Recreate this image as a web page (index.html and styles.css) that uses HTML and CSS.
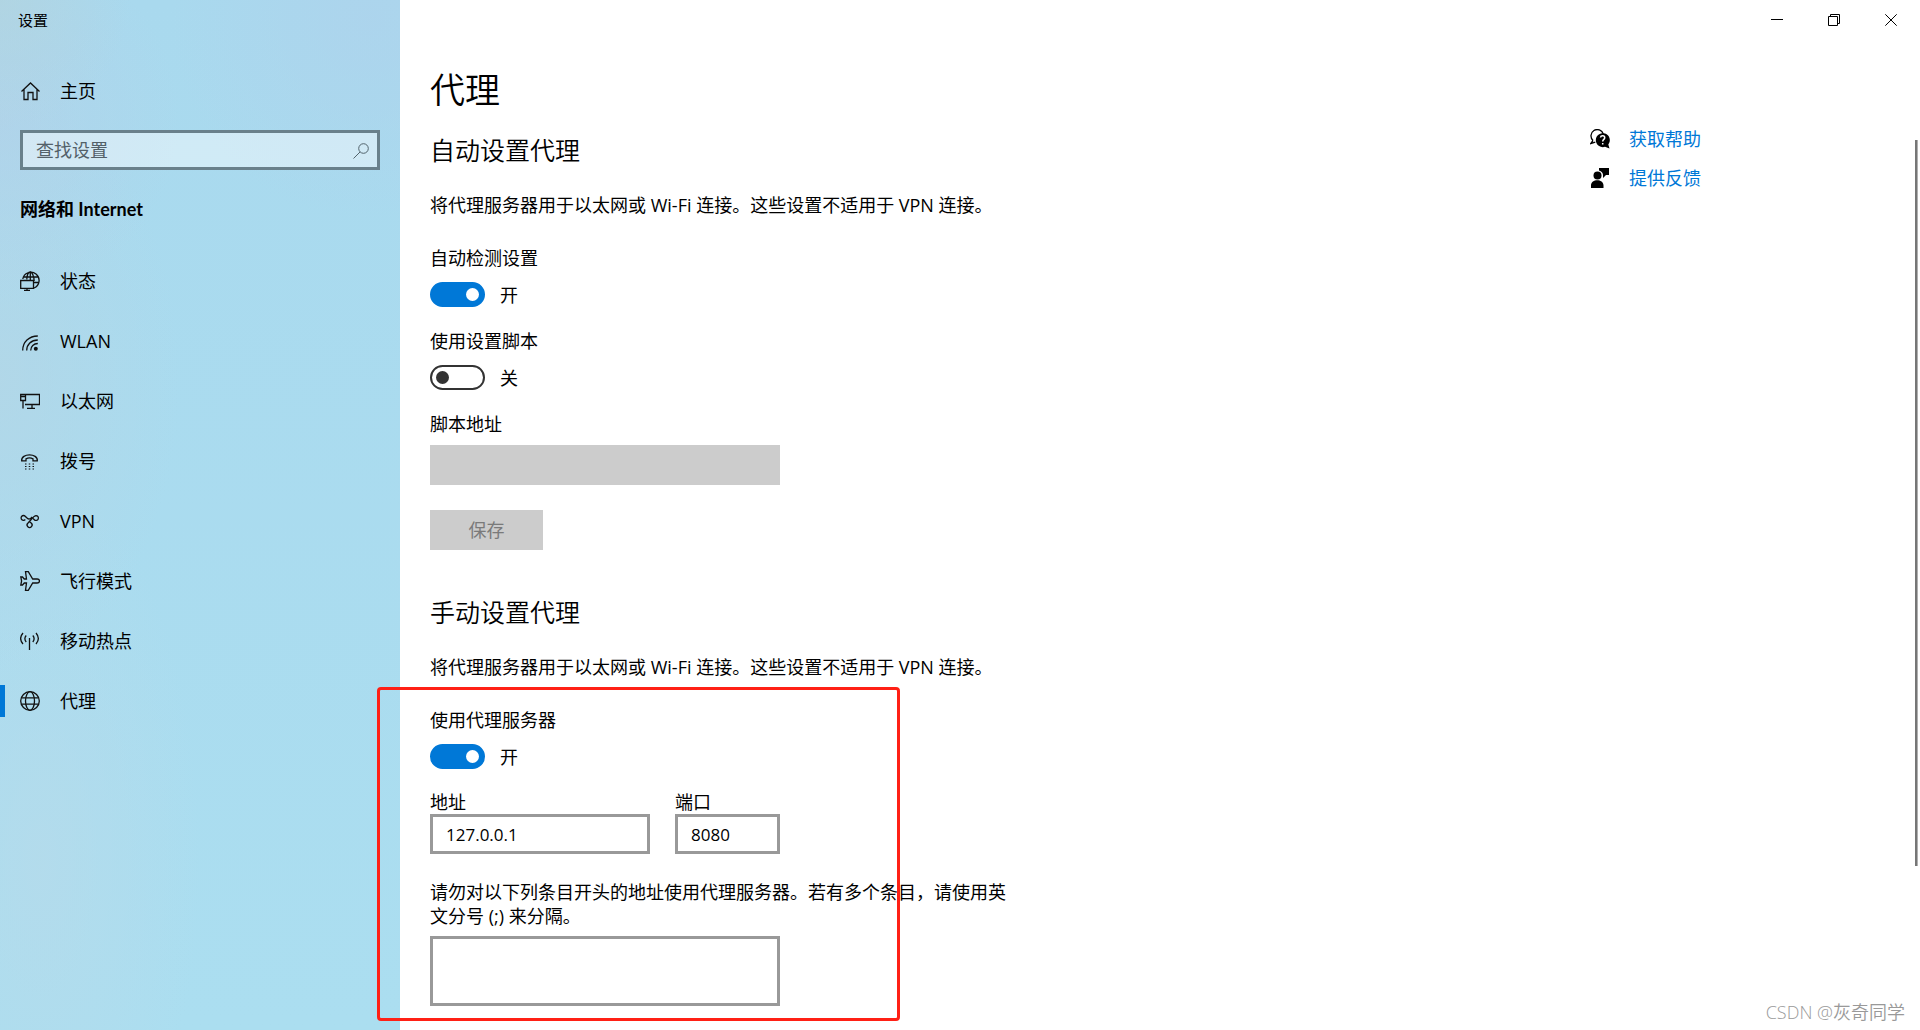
FILE: index.html
```html
<!DOCTYPE html>
<html lang="zh-CN">
<head>
<meta charset="utf-8">
<meta name="viewport" content="width=device-width, initial-scale=1">
<title>设置</title>
<link rel="stylesheet" href="styles.css">
</head>
<body>
<div class="app">
  <aside class="sidebar">
    <div class="window-title">设置</div>
    <a class="nav-link home" href="#home">
      <svg class="icon" viewBox="0 0 20 20"><path d="M1.500 10.500 10.500 2l9 8.500M4 8.500V18.500h4v-7h5v7h4V8.500"/></svg>
      主页
    </a>
    <form class="search">
      <input class="search-input" type="search" placeholder="查找设置" aria-label="查找设置">
      <svg class="search-icon" viewBox="0 0 16 16"><circle cx="10.500" cy="5.500" r="4.800"/><path d="M7 9 .5 15.500"/></svg>
    </form>
    <h2 class="nav-heading">网络和 Internet</h2>
    <nav class="nav">
      <a class="nav-link" href="#status">
        <svg class="icon" viewBox="0 0 20 20"><path d="M2.800 8A8.200 8.200 0 1 1 14 17M3.500 6h14.800M14 11.500h4.500M6.800 8.500C7 4 8.500 1 10.300 1s3.800 4.500 3.800 9M10.300 1v8"/><path d="M.7 9.500h12.800v7.800H.7zM7 17.300v2M4 19.400h6"/></svg>
        状态
      </a>
      <a class="nav-link" href="#wlan">
        <svg class="icon" viewBox="0 0 20 20"><path d="M2.700 19.500C2.700 11 9 5 17.800 5M6.700 19.500c0-6 4.500-10.500 11.100-10.500M10.700 19.500c0-4 3-7 7.100-7"/><circle class="solid" cx="15.800" cy="17.800" r="2"/></svg>
        WLAN
      </a>
      <a class="nav-link" href="#ethernet">
        <svg class="icon" viewBox="0 0 20 20"><path d="M6 3.500h13.500v10H5M.7 3.500H5.500v6H.7zM.7 5.500H5.500M3 9.500V17.500M12 13.500v3.500M7 17.400h8"/></svg>
        以太网
      </a>
      <a class="nav-link" href="#dialup">
        <svg class="icon" viewBox="0 0 20 20"><path d="M1.700 9.800C.8 2 18.200 2 17.300 9.800H13V7.800C11 6.800 8 6.800 6 7.800v2z"/><path class="dots" d="M5 13h9M5 15.500h9M5 18h9"/></svg>
        拨号
      </a>
      <a class="nav-link" href="#vpn">
        <svg class="icon" viewBox="0 0 20 20"><path d="M5.300 8.500A2.400 2.400 0 1 1 5.200 5.200C7 7 7.500 8 9 8s2-1 3-2M16 4.600a2.400 2.400 0 1 1-1.700 4.100l-1.200-1.200M16 4.600c-2 0-3.500 2.400-5 4.200l-3.200 3.500a2.500 2.500 0 1 0 3.600 0L9.900 11"/></svg>
        VPN
      </a>
      <a class="nav-link" href="#airplane">
        <svg class="icon" viewBox="0 0 20 20"><path d="M6.500 8 5.500.7h2.800L12.700 8h4.500c3 0 3 4 0 4h-4.500l-4.400 7.300H5.500L6.500 12H4.300L2.500 14H.8l.8-4L.8 6h1.700l1.800 2z"/></svg>
        飞行模式
      </a>
      <a class="nav-link" href="#hotspot">
        <svg class="icon" viewBox="0 0 20 20"><path d="M9.500 7v12M3 2C0 5.500 0 9.500 3 13M6.200 4.500C4.500 6.500 4.500 8.800 6.200 11M16 2c3 3.500 3 7.500 0 11M12.800 4.500c1.700 2 1.700 4.300 0 6.500"/></svg>
        移动热点
      </a>
      <a class="nav-link selected" href="#proxy" aria-current="page">
        <svg class="icon" viewBox="0 0 20 20"><circle cx="10" cy="10" r="9.300"/><ellipse cx="10" cy="10" rx="4.500" ry="9.300"/><path d="M1.500 6.800h17M1.500 13.200h17"/></svg>
        代理
      </a>
    </nav>
  </aside>

  <div class="window">
    <header class="titlebar">
      <button class="caption" type="button" aria-label="最小化"><svg viewBox="0 0 12 12"><path d="M0 5.500h12"/></svg></button>
      <button class="caption" type="button" aria-label="还原"><svg viewBox="0 0 12 12"><path d="M.5 2.500h9v9h-9zM2.500 2.500v-2h9v9h-2"/></svg></button>
      <button class="caption" type="button" aria-label="关闭"><svg viewBox="0 0 12 12"><path d="M.3.3l11.400 11.400M11.700.3.3 11.700"/></svg></button>
    </header>

    <div class="page">
      <main class="content">
        <h1 class="page-title">代理</h1>

        <section>
          <h2 class="section-title">自动设置代理</h2>
          <p class="intro">将代理服务器用于以太网或 Wi-Fi 连接。这些设置不适用于 VPN 连接。</p>
          <label class="label first" for="detect">自动检测设置</label>
          <div class="switch-row"><input class="switch" id="detect" type="checkbox" role="switch" checked><span>开</span></div>
          <label class="label" for="script">使用设置脚本</label>
          <div class="switch-row"><input class="switch" id="script" type="checkbox" role="switch"><span>关</span></div>
          <label class="label" for="script-url">脚本地址</label>
          <input class="field disabled" id="script-url" type="text" disabled>
          <button class="save" type="button" disabled>保存</button>
        </section>

        <section class="manual">
          <h2 class="section-title">手动设置代理</h2>
          <p class="intro">将代理服务器用于以太网或 Wi-Fi 连接。这些设置不适用于 VPN 连接。</p>
          <label class="label first" for="use-proxy">使用代理服务器</label>
          <div class="switch-row"><input class="switch" id="use-proxy" type="checkbox" role="switch" checked><span>开</span></div>
          <div class="endpoint">
            <div class="address"><label for="address">地址</label><input class="field" id="address" type="text" value="127.0.0.1"></div>
            <div class="port"><label for="port">端口</label><input class="field" id="port" type="text" value="8080"></div>
          </div>
          <label class="label exceptions-label" for="exceptions">请勿对以下列条目开头的地址使用代理服务器。若有多个条目，请使用英文分号 (;) 来分隔。</label>
          <textarea class="field exceptions" id="exceptions"></textarea>
        </section>
      </main>

      <aside class="related">
        <a class="related-link" href="#help">
          <svg class="related-icon" viewBox="0 0 20 20"><path class="line" d="M3 11.500A6.300 6.300 0 1 1 13.300 5M3 11.500.8 14.500l4.500-1.300"/><path d="M19.500 19.500 15 17.800A7 7 0 1 1 18.300 15.500z"/><path class="mark" d="M10.500 8.500c.3-2.500 4.300-2.200 4.200.2 0 1.800-2 1.600-2 3.800M12.700 14v1.500"/></svg>
          获取帮助
        </a>
        <a class="related-link" href="#feedback">
          <svg class="related-icon" viewBox="0 0 20 20"><circle cx="7.500" cy="7.500" r="4"/><path d="M1 20v-2.500C1 10.500 13.500 10.500 13.500 17.500V20zM9 0h10v7h-3l-3 3V7c0-2-1.500-4-4-4.500z"/></svg>
          提供反馈
        </a>
      </aside>
    </div>
    <div class="scroll-thumb"></div>
  </div>
  <div class="highlight"></div>
  <div class="watermark">CSDN @灰奇同学</div>
</div>
</body>
</html>
```
FILE: styles.css
```css
* { box-sizing: border-box; }

body {
  margin: 0;
  background: #fff;
  color: #000;
  font: 400 18px/24px "Open Sans", "Noto Sans CJK SC", sans-serif;
}

h1, h2, p { margin: 0; font-weight: inherit; }
a { color: inherit; text-decoration: none; }
input, button, textarea { font: inherit; color: inherit; }

.app {
  position: relative;
  display: grid;
  grid-template-columns: 400px 1fr;
  min-height: 100vh;
}

/* Sidebar */
.sidebar {
  background:
    radial-gradient(circle at 0 0, #b4d3dc99, transparent 130px),
    radial-gradient(circle at 0 120px, #b3d1e8aa, transparent 180px),
    radial-gradient(circle at 370px 20px, #aed2ecaa, transparent 200px),
    radial-gradient(ellipse at 0 380px, #b4d6e6bb, transparent 180px),
    radial-gradient(ellipse at 40px 860px, #b5dbebcc, transparent 160px),
    linear-gradient(#a9d9ee, #abdef0);
}

.window-title {
  padding: 8px 18px;
  font-size: 15px;
}

.nav-link {
  display: flex;
  align-items: center;
  gap: 20px;
  height: 60px;
  padding-left: 20px;
}

.home { margin: 21px 0 9px; }

.icon {
  width: 20px;
  height: 20px;
  fill: none;
  stroke: #111;
  stroke-width: 1.3;
}
.icon .solid { fill: #111; stroke: none; }
.icon .dots { stroke-dasharray: 1.500 2.250; stroke-width: 1; }

.search {
  position: relative;
  margin: 0 20px;
}
.search-input {
  display: block;
  width: 100%;
  height: 40px;
  padding: 0 40px 0 13px;
  border: 3px solid #69808b;
  border-radius: 0;
  outline: 0;
  background: #ffffff73;
  appearance: none;
}
.search-input::placeholder { color: #536068; opacity: 1; }
.search-icon {
  position: absolute;
  top: 13px;
  right: 11px;
  width: 16px;
  height: 16px;
  fill: none;
  stroke: #52636c;
}

.nav-heading {
  padding: 27px 20px 30px;
  font-family: Lato, "Noto Sans CJK SC", sans-serif;
  font-size: 18px;
  font-weight: 700;
}

.selected {
  padding-left: 15px;
  border-left: 5px solid #0078d7;
  border-image: linear-gradient(transparent 25%, #0078d7 25% 75%, transparent 75%) 1;
  border-width: 0 0 0 5px;
}

/* Window chrome */
.window {
  position: relative;
  min-width: 0;
}
.titlebar {
  display: flex;
  justify-content: flex-end;
  padding-right: 1px;
}
.caption {
  display: grid;
  place-items: center;
  width: 57px;
  height: 40px;
  padding: 0;
  border: 0;
  background: none;
}
.caption svg {
  width: 12px;
  height: 12px;
  fill: none;
  stroke: #000;
}

.page {
  display: grid;
  grid-template-columns: 1fr 330px;
  padding: 26px 0 24px 30px;
}
.page-title {
  margin-bottom: 20px;
  font-size: 35px;
  font-weight: 350;
  line-height: 48px;
}
.section-title {
  font-size: 25px;
  font-weight: 350;
  line-height: 32px;
}
.intro { margin-top: 27px; }

/* Form controls */
.label {
  display: block;
  width: fit-content;
  margin-top: 22px;
}
.label.first { margin-top: 29px; }

.switch-row {
  display: flex;
  align-items: center;
  gap: 15px;
  height: 25px;
  margin-top: 12px;
}
.switch {
  display: flex;
  align-items: center;
  width: 55px;
  height: 25px;
  margin: 0;
  padding: 0 4px;
  border: 2px solid #333;
  border-radius: 13px;
  appearance: none;
}
.switch::before {
  content: "";
  width: 13px;
  height: 13px;
  border-radius: 50%;
  background: #333;
}
.switch:checked {
  justify-content: flex-end;
  border-color: #0078d7;
  background: #0078d7;
}
.switch:checked::before { background: #fff; }

.field {
  display: block;
  width: 100%;
  height: 40px;
  padding: 0 13px;
  border: 3px solid #999;
  border-radius: 0;
  outline: 0;
  background: #fff;
  font-size: 17px;
}
.disabled {
  max-width: 350px;
  margin-top: 9px;
  border-color: #ccc;
  background: #ccc;
}
.save {
  width: 113px;
  height: 40px;
  margin-top: 25px;
  padding: 0;
  border: 0;
  background: #ccc;
  color: #7a7a7a;
}

.manual { margin-top: 46px; }
.endpoint {
  display: flex;
  gap: 25px;
  max-width: 350px;
  margin-top: 21px;
}
.address { flex: 1; }
.port { width: 105px; }
.endpoint label { display: block; }
.exceptions-label {
  max-width: 580px;
  margin-top: 26px;
}
.exceptions {
  max-width: 350px;
  height: 70px;
  margin-top: 8px;
  resize: none;
}

/* Related links */
.related {
  display: flex;
  flex-direction: column;
  align-items: flex-start;
  gap: 15px;
  padding-top: 61px;
}
.related-link {
  display: flex;
  align-items: center;
  gap: 19px;
  color: #0078d7;
}
.related-icon {
  width: 20px;
  height: 20px;
  fill: #000;
}
.related-icon .line { fill: none; stroke: #000; stroke-width: 1.3; }
.related-icon .mark { fill: none; stroke: #fff; stroke-width: 1.5; }

.scroll-thumb {
  position: absolute;
  top: 140px;
  right: 2px;
  bottom: 164px;
  width: 3px;
  background: linear-gradient(to right, #767676 67%, #b0b0b0 67%);
}

/* Overlays */
.highlight {
  position: absolute;
  top: 687px;
  left: 377px;
  width: 523px;
  height: 334px;
  border: 3px solid #ff2015;
  border-radius: 4px;
  pointer-events: none;
}
.watermark {
  position: absolute;
  right: 15px;
  bottom: 6px;
  color: #999;
  font-weight: 350;
}
```
